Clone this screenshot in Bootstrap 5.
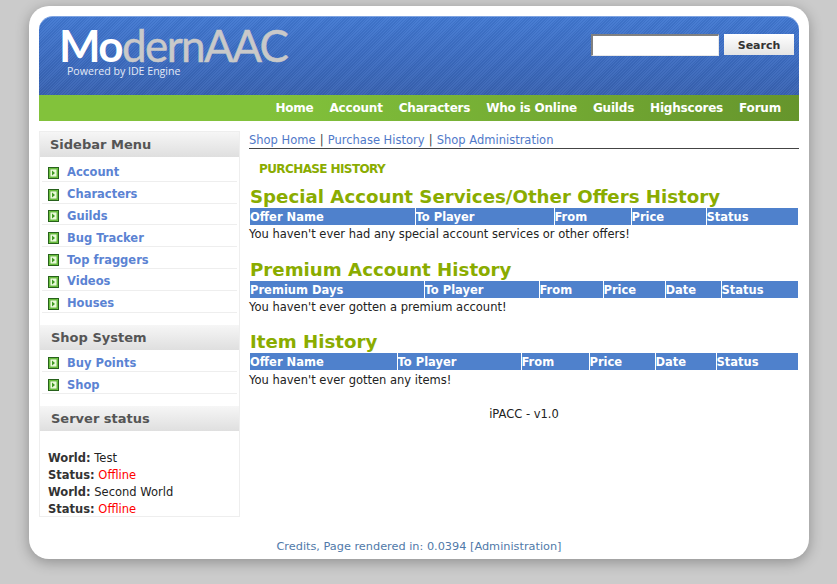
<!DOCTYPE html>
<html lang="en">
<head>
<meta charset="utf-8">
<title>ModernAAC</title>
<link rel="stylesheet" href="https://cdn.jsdelivr.net/npm/bootstrap@5.3.0/dist/css/bootstrap.min.css">
<style>
html,body{height:100%}
body{background:#cbcbcb;font-family:"DejaVu Sans",Verdana,sans-serif;font-size:11.5px;line-height:17px;color:#222;overflow:hidden}
a{text-decoration:none;color:#5079c9}
.shell{width:780px;height:553px;margin:6px 0 0 29px;background:#fff;border-radius:20px;padding:10px;box-shadow:0 3px 14px rgba(0,0,0,.3)}
.masthead{height:79px;border-radius:14px 14px 0 0;border-top:1px solid #7ea3e2;background:repeating-linear-gradient(135deg,rgba(255,255,255,.045) 0 1px,rgba(0,0,0,.045) 1px 2px),linear-gradient(#4178d2,#3862b2);padding:0 5px 0 20px}
.logo-main{font-family:Lato,sans-serif;font-size:44px;line-height:39px;letter-spacing:-1.6px;color:#c9c9c9;margin-top:9px;font-weight:400;-webkit-text-stroke:.5px #c9c9c9}
.logo-main b{color:#fff;font-weight:700;-webkit-text-stroke:0}
.logo-sub{font-family:"Open Sans",sans-serif;font-size:10.6px;line-height:12px;color:#e3e9f5;margin:0 0 0 8px}
.search-box{margin-top:17px}
.search-input{width:128px;height:22px;border:2px solid #808080;border-right:1px solid #e8e8e8;border-bottom:1px solid #e8e8e8;background:#fff;margin-right:5px;padding:0}
.search-btn{width:70px;height:21px;border:0;background:linear-gradient(#fff,#e4e4e4);font-family:"DejaVu Sans",sans-serif;font-size:11px;font-weight:700;line-height:19px;color:#333;padding:2px 0 0}
.mainnav{height:26px;background:linear-gradient(90deg,#82c23b 0,#82c23b 30%,#66952c 100%);padding-right:18px;gap:16px}
.mainnav a{color:#fff;font-weight:700;font-size:12px;line-height:26px;letter-spacing:-.2px}
.page-body{margin-top:10px;height:386px}
.sidepanel{width:201px;flex:none;border:1px solid #eee;height:386px}
.side-head{height:25px;margin:0;padding-left:10px;background:linear-gradient(#f6f6f6,#dfdfdf);font-size:13px;font-weight:700;line-height:25px;color:#555}
.side-head.second{margin:12px 0 0;padding-left:11px}
.side-list{list-style:none;margin:3px 2px 0;padding:0}
.side-list.tight{margin-top:1px}
.side-list li{height:21.8px;border-bottom:1px solid #eee;padding:5px 0 0 6px;display:flex;align-items:center;gap:8px}
.side-list a{font-weight:700;font-size:11.5px;color:#5b83d3}
.bullet{width:11px;height:12px;flex:none}
.status-block{padding:19px 0 0 8px;line-height:17px}
.status-block b{color:#333}
.off{color:#f00}
.content{margin-left:9px;width:550px;flex:none}
.shop-links{height:18px;border-bottom:1px solid #444;line-height:17px;font-size:11.5px;color:#444;padding-top:1px}
.sep{margin:0 .5px}
.page-title{color:#8aac00;font-weight:700;font-size:12px;line-height:16px;margin:12px 0 0 10px;font-family:"DejaVu Sans",sans-serif;letter-spacing:-.6px}
.sec-title{color:#8aac00;font-weight:700;font-size:18.2px;line-height:22px;margin:9px 0 0 1px}
.sec-title.next{margin-top:16px}
.sec-title.last{margin-top:15px}
.hist{width:548px;margin-left:1px;table-layout:fixed;border-collapse:collapse}
.hist th{background:#4f81cc;color:#fff;font-weight:700;font-size:11.5px;height:17px;line-height:16px;padding:1px 0 0;border-left:1px solid #fff;white-space:nowrap}
.hist th:first-child{border-left:0}
.note{margin:0;line-height:17px;padding-top:1px}
.note.final{padding-top:2px}
.version{text-align:center;margin:17px 0 0;line-height:17px;font-size:11.5px}
.foot{text-align:center;margin-top:21px;line-height:17px;color:#5079a9;font-size:11.3px}
.foot a{color:#5079a9}
.w-a1{width:165px}.w-a2{width:139px}.w-a3{width:77px}.w-a4{width:75px}
.w-b1{width:174px}.w-b2{width:115px}.w-b3{width:64px}.w-b4{width:62px}.w-b5{width:56px}
.w-c1{width:147px}.w-c2{width:124px}.w-c3{width:68px}.w-c4{width:66px}.w-c5{width:61px}
</style>
</head>
<body>
<svg width="0" height="0" class="d-block"><defs><symbol id="arrow" viewBox="0 0 11 12"><rect x=".5" y=".5" width="10" height="11" fill="#76cc44" stroke="#27611c"/><rect x="2" y="2" width="7" height="8" fill="#eafbd9" stroke="#55a833" stroke-width=".8"/><path d="M4 3.5l3 2.5-3 2.500z" fill="#3f9a22"/></symbol></defs></svg>
<div class="shell">
  <header class="masthead d-flex justify-content-between">
    <div>
      <div class="logo-main"><b>Mo</b>dernAAC</div>
      <p class="logo-sub">Powered by IDE Engine</p>
    </div>
    <form class="search-box d-flex align-items-start">
      <input class="search-input" type="text" aria-label="Search">
      <button class="search-btn" type="button">Search</button>
    </form>
  </header>
  <nav class="mainnav d-flex justify-content-end">
    <a href="#">Home</a><a href="#">Account</a><a href="#">Characters</a><a href="#">Who is Online</a><a href="#">Guilds</a><a href="#">Highscores</a><a href="#">Forum</a>
  </nav>
  <div class="page-body d-flex">
    <aside class="sidepanel">
      <h2 class="side-head">Sidebar Menu</h2>
      <ul class="side-list">
        <li><svg class="bullet"><use href="#arrow"/></svg><a href="#">Account</a></li>
        <li><svg class="bullet"><use href="#arrow"/></svg><a href="#">Characters</a></li>
        <li><svg class="bullet"><use href="#arrow"/></svg><a href="#">Guilds</a></li>
        <li><svg class="bullet"><use href="#arrow"/></svg><a href="#">Bug Tracker</a></li>
        <li><svg class="bullet"><use href="#arrow"/></svg><a href="#">Top fraggers</a></li>
        <li><svg class="bullet"><use href="#arrow"/></svg><a href="#">Videos</a></li>
        <li><svg class="bullet"><use href="#arrow"/></svg><a href="#">Houses</a></li>
      </ul>
      <h2 class="side-head second">Shop System</h2>
      <ul class="side-list tight">
        <li><svg class="bullet"><use href="#arrow"/></svg><a href="#">Buy Points</a></li>
        <li><svg class="bullet"><use href="#arrow"/></svg><a href="#">Shop</a></li>
      </ul>
      <h2 class="side-head second">Server status</h2>
      <div class="status-block">
        <b>World:</b> Test<br>
        <b>Status:</b> <span class="off">Offline</span><br>
        <b>World:</b> Second World<br>
        <b>Status:</b> <span class="off">Offline</span>
      </div>
    </aside>
    <main class="content">
      <div class="shop-links"><a href="#">Shop Home</a> <span class="sep">|</span> <a href="#">Purchase History</a> <span class="sep">|</span> <a href="#">Shop Administration</a></div>
      <div class="page-title">PURCHASE HISTORY</div>
      <h3 class="sec-title">Special Account Services/Other Offers History</h3>
      <table class="hist"><thead><tr><th class="w-a1">Offer Name</th><th class="w-a2">To Player</th><th class="w-a3">From</th><th class="w-a4">Price</th><th>Status</th></tr></thead></table>
      <p class="note">You haven't ever had any special account services or other offers!</p>
      <h3 class="sec-title next">Premium Account History</h3>
      <table class="hist"><thead><tr><th class="w-b1">Premium Days</th><th class="w-b2">To Player</th><th class="w-b3">From</th><th class="w-b4">Price</th><th class="w-b5">Date</th><th>Status</th></tr></thead></table>
      <p class="note">You haven't ever gotten a premium account!</p>
      <h3 class="sec-title last">Item History</h3>
      <table class="hist"><thead><tr><th class="w-c1">Offer Name</th><th class="w-c2">To Player</th><th class="w-c3">From</th><th class="w-c4">Price</th><th class="w-c5">Date</th><th>Status</th></tr></thead></table>
      <p class="note final">You haven't ever gotten any items!</p>
      <p class="version">iPACC - v1.0</p>
    </main>
  </div>
  <footer class="foot"><a href="#">Credits</a>, Page rendered in: 0.0394 <a href="#">[Administration]</a></footer>
</div>
<script src="https://cdn.jsdelivr.net/npm/bootstrap@5.3.0/dist/js/bootstrap.bundle.min.js"></script>
</body>
</html>
